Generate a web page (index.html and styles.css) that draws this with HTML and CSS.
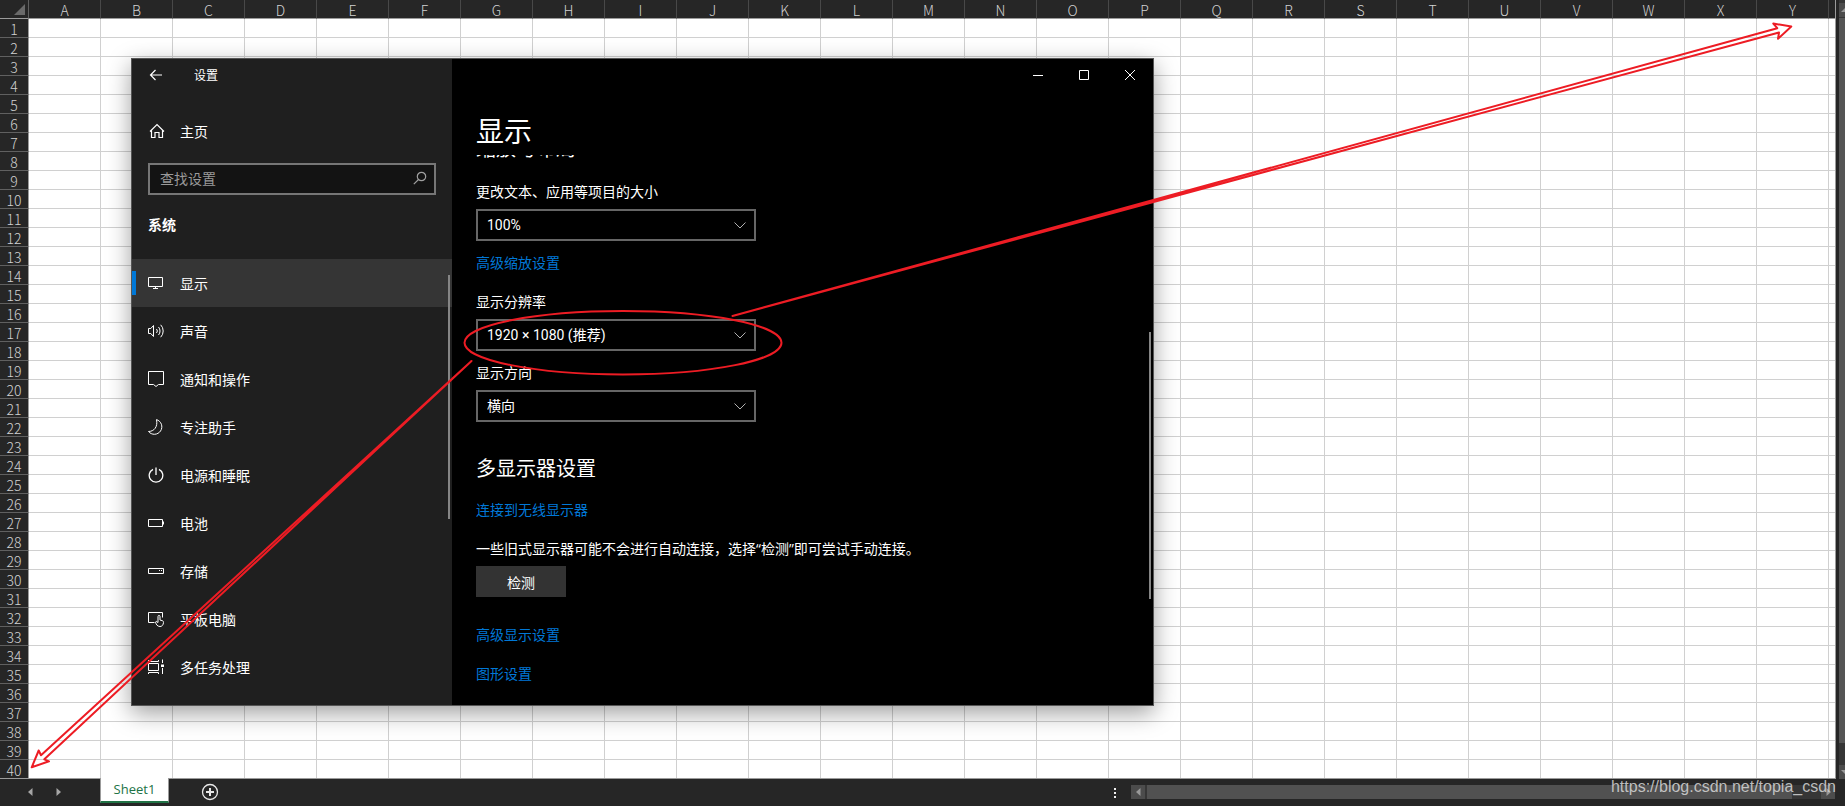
FILE: index.html
```html
<!DOCTYPE html>
<html lang="zh-CN">
<head>
<meta charset="utf-8">
<title>Sheet1</title>
<link rel="stylesheet" href="styles.css">
</head>
<body>
<div class="app">
  <div class="workspace">
    <div class="sheet">
      <table class="grid">
        <thead><tr id="columns"><th class="corner"><svg width="12" height="12" viewBox="0 0 12 12"><path d="M11 0v11H0z" fill="#6a6a6a"/></svg></th></tr></thead>
        <tbody id="rows"></tbody>
      </table>
    </div>
    <div class="vscroll">
      <button class="scroll-btn" aria-label="向上滚动"><svg width="6" height="14" viewBox="0 0 6 14"><path d="M6 5v4H2z" fill="#999"/></svg></button>
      <div class="vthumb"></div>
      <button class="scroll-btn" aria-label="向下滚动"><svg width="6" height="14" viewBox="0 0 6 14"><path d="M2 5h4v4z" fill="#999"/></svg></button>
    </div>
  </div>
  <footer class="tabs">
    <div class="tab-nav">
      <button aria-label="上一个"><svg width="5" height="8" viewBox="0 0 5 8"><path d="M4.500 0v8L0 4z" fill="#a6a6a6"/></svg></button>
      <button aria-label="下一个"><svg width="5" height="8" viewBox="0 0 5 8"><path d="M.5 0v8L5 4z" fill="#a6a6a6"/></svg></button>
    </div>
    <button class="tab">Sheet1</button>
    <button class="add" aria-label="新工作表"><svg width="18" height="18" viewBox="0 0 18 18" fill="none" stroke="#e8e8e8"><circle cx="9" cy="9" r="7.500" stroke-width="1.300"/><path d="M9 5v8M5 9h8" stroke-width="2"/></svg></button>
    <svg class="dots" width="2" height="10" viewBox="0 0 2 10" fill="#f0f0f0"><path d="M0 0h2v2H0zM0 4h2v2H0zM0 8h2v2H0z"/></svg>
    <div class="hscroll">
      <button class="h-btn" aria-label="向左滚动"><svg width="5" height="8" viewBox="0 0 5 8"><path d="M4.500 0v8L0 4z" fill="#999"/></svg></button>
      <div class="hthumb"></div>
      <button class="h-btn" aria-label="向右滚动"><svg width="5" height="8" viewBox="0 0 5 8"><path d="M.5 0v8L5 4z" fill="#999"/></svg></button>
    </div>
  </footer>
</div>

<section class="window">
  <aside class="side">
    <div class="side-title">
      <button class="back" aria-label="返回"><svg width="14" height="12" viewBox="0 0 14 12" fill="none" stroke="#fff" stroke-width="1.200"><path d="M13 6H1.500M6.500 1l-5 5 5 5"/></svg></button>
      <span>设置</span>
    </div>
    <button class="home"><svg width="16" height="16" viewBox="0 0 16 16" fill="none" stroke="#fff" stroke-width="1.200"><path d="M1 8.500 8 1.500l7 7M2.500 7.500v7h3.500v-5h4v5h3.500v-7"/></svg>主页</button>
    <div class="search">
      <input type="text" placeholder="查找设置" aria-label="查找设置">
      <svg width="14" height="14" viewBox="0 0 14 14" fill="none" stroke="#a0a0a0" stroke-width="1.200"><circle cx="8.500" cy="5.500" r="4.200"/><path d="M5.500 8.500.8 13.200"/></svg>
    </div>
    <h2 class="group">系统</h2>
    <nav class="nav">
      <button class="item active"><svg viewBox="0 0 16 16"><path d="M.5 2.500h14v9H.5zM5 13.500h5M7.500 11.500v2"/></svg>显示</button>
      <button class="item"><svg viewBox="0 0 16 16"><path d="M.5 5.500h2.300L5.500 2.500v11l-2.700-3H.5zM8.500 6a3 3 0 0 1 0 4M10.500 4a6 6 0 0 1 0 8M12.700 1.800a9 9 0 0 1 0 12.400"/></svg>声音</button>
      <button class="item"><svg viewBox="0 0 16 16"><path d="M.5 .5h15v13h-5L8 15.500l-2.500-2h-5z"/></svg>通知和操作</button>
      <button class="item"><svg viewBox="0 0 16 16"><path d="M8.500.6a7.500 7.500 0 1 1-8 11.900C6 12.500 10 8 8.500.6z"/></svg>专注助手</button>
      <button class="item"><svg viewBox="0 0 16 16"><path d="M5 2.300a6.800 6.800 0 1 0 6 0M8 .5V8" stroke-width="1.300"/></svg>电源和睡眠</button>
      <button class="item"><svg viewBox="0 0 16 16"><path d="M.5 4.500h14v7H.5zM15.500 6.500v3"/></svg>电池</button>
      <button class="item"><svg viewBox="0 0 16 16"><path d="M.5 5.500h15v5H.5zM11 7.500h1M13 7.500h1"/></svg>存储</button>
      <button class="item"><svg viewBox="0 0 16 16"><path d="M6.500 11.500h-6v-10h14v5M10 11V5.500c0-1.500 2-1.500 2 0V9l2 .6c1.200.3 1.700 1 1.500 2-.3 2.500-1.500 3.900-3.500 3.900-2.500 0-4-2-4.500-4.500.5-1 2-.8 2.500 1"/></svg>平板电脑</button>
      <button class="item"><svg viewBox="0 0 16 16"><path d="M.5 4.500h10v7H.5zM.5 1v1.500h10V1M.5 15v-1.500h10V15M14.500.5V4M14.500 9v6"/><path d="M13 5.500h3v2.500h-3z" fill="#fff" stroke="none"/></svg>多任务处理</button>
    </nav>
    <div class="thumb side-thumb"></div>
  </aside>
  <main class="main">
    <div class="caption">
      <button aria-label="最小化"><svg width="10" height="10" viewBox="0 0 10 10"><path d="M0 5.500h10"/></svg></button>
      <button aria-label="最大化"><svg width="10" height="10" viewBox="0 0 10 10"><path d="M.5.5h9v9h-9z"/></svg></button>
      <button aria-label="关闭"><svg width="10" height="10" viewBox="0 0 10 10"><path d="M0 0l10 10M10 0 0 10"/></svg></button>
    </div>
    <h1>显示</h1>
    <div class="scroll">
      <h2 class="scrolled">缩放与布局</h2>
      <div class="field first">
        <label for="scale">更改文本、应用等项目的大小</label>
        <div class="combo"><select id="scale"><option>100%</option></select><svg width="12" height="7" viewBox="0 0 12 7"><path d="M.5.5 6 6 11.500.5"/></svg></div>
      </div>
      <a class="after-field" href="#">高级缩放设置</a>
      <div class="field spaced">
        <label for="resolution">显示分辨率</label>
        <div class="combo"><select id="resolution"><option>1920 × 1080 (推荐)</option></select><svg width="12" height="7" viewBox="0 0 12 7"><path d="M.5.5 6 6 11.500.5"/></svg></div>
      </div>
      <div class="field">
        <label for="direction">显示方向</label>
        <div class="combo"><select id="direction"><option>横向</option></select><svg width="12" height="7" viewBox="0 0 12 7"><path d="M.5.5 6 6 11.500.5"/></svg></div>
      </div>
      <h2 class="multi">多显示器设置</h2>
      <a class="wireless" href="#">连接到无线显示器</a>
      <p class="note">一些旧式显示器可能不会进行自动连接，选择<span class="quote">“</span>检测<span class="quote">”</span>即可尝试手动连接。</p>
      <button class="detect">检测</button>
      <a class="advanced" href="#">高级显示设置</a>
      <a class="spaced" href="#">图形设置</a>
    </div>
    <div class="thumb main-thumb"></div>
  </main>
</section>

<svg class="marks" width="1845" height="806" viewBox="0 0 1845 806" fill="none" stroke="#ed1c24" stroke-width="2" stroke-linejoin="round">
  <ellipse cx="623" cy="342.700" rx="158.500" ry="31.700"/>
  <path d="M732.500 316 1777.300 28.200 1773.300 23.600 1791.300 26.500 1778 38.800 1779 32.500z"/>
  <path d="M471.500 361 41 755.300 38.700 750.500 31.700 767.300 49 761.300 44.300 759.300z"/>
</svg>
<div class="watermark">https://blog.csdn.net/topia_csdn</div>
<script src="script.js"></script>
</body>
</html>
```
FILE: styles.css
```css
* { box-sizing: border-box; }
body {
  margin: 0;
  background: #262626;
  font-family: "Noto Sans CJK SC", sans-serif;
  font-size: 14px;
  line-height: 20px;
  overflow: hidden;
}
button {
  margin: 0;
  padding: 0;
  border: 0;
  background: none;
  color: inherit;
  font: inherit;
}
svg { display: block; flex: none; }
h1, h2, p { margin: 0; font-weight: 400; }

/* spreadsheet */
.app { display: flex; flex-direction: column; height: 100vh; }
.workspace { flex: 1; min-height: 0; display: flex; gap: 3px; }
.sheet {
  flex: 1;
  min-width: 0;
  overflow: hidden;
  background: #fff;
  border-right: 1px solid #9b9b9b;
  border-bottom: 1px solid #9b9b9b;
}
.grid { width: 100%; table-layout: fixed; border-collapse: separate; border-spacing: 0; }
.grid th, .grid td { height: 19px; padding: 0; border-right: 1px solid #d0d0d0; border-bottom: 1px solid #d0d0d0; }
.grid th {
  width: 72px;
  padding-top: 2px;
  background: #262626;
  color: #d2d2d2;
  font-weight: 300;
  line-height: 16px;
  text-align: center;
  overflow: hidden;
}
.grid thead th { border-right-color: #484848; border-bottom-color: #9b9b9b; }
.grid tbody th { border-right-color: #9b9b9b; border-bottom-color: #606060; }
.grid thead .corner { width: 29px; border-right-color: #606060; }
.corner svg { margin-left: 14px; }
.grid thead th:last-child { width: auto; }
.grid tr > :last-child { border-right: 0; }

.vscroll { width: 6px; padding-top: 3px; background: #363636; display: flex; flex-direction: column; }
.scroll-btn { height: 14px; flex: none; background: #4c4c4c; }
.vthumb { flex: 1; margin: 1px 0 22px; background: #555; }

.tabs { height: 27px; flex: none; display: flex; align-items: flex-start; background: #262626; }
.tab-nav { width: 100px; height: 26px; padding-left: 28px; display: flex; align-items: center; gap: 23px; }
.tab {
  width: 69px;
  height: 25px;
  margin-top: -1px;
  background: #fff;
  color: #217346;
  border: 1px solid #9b9b9b;
  border-width: 0 1px 2px;
  border-bottom-color: #217346;
  font-family: "Open Sans", sans-serif;
  font-size: 13px;
  line-height: 23px;
}
.add { margin: 4px 0 0 32px; }
.dots { margin: 9px 15px 0 auto; }
.hscroll { width: 704px; height: 14px; margin: 6px 10px 0 0; display: flex; background: #363636; }
.h-btn { width: 14px; background: #4c4c4c; display: flex; align-items: center; justify-content: center; }
.hthumb { flex: 1; margin: 0 29px 0 2px; background: #515151; }

/* settings window */
.window {
  position: absolute;
  left: 131px;
  top: 58px;
  width: 1023px;
  height: 648px;
  display: grid;
  grid-template-columns: 320px 1fr;
  border: 1px solid #555;
  background: #000;
  color: #fff;
  box-shadow: 0 7px 22px rgba(0, 0, 0, .38);
}
.side { position: relative; background: #1f1f1f; display: flex; flex-direction: column; }
.side-title { height: 32px; padding-left: 17px; display: flex; align-items: center; gap: 31px; font-size: 12px; }
.home { height: 48px; margin-top: 16px; padding-left: 17px; display: flex; align-items: center; gap: 15px; }
.search {
  height: 32px;
  margin: 8px 16px 0;
  padding: 0 7px 2px 10px;
  display: flex;
  align-items: center;
  border: 2px solid #767676;
  background: #131313;
}
.search input { flex: 1; min-width: 0; padding: 0; border: 0; outline: 0; background: none; color: #fff; font: inherit; }
.search input::placeholder { color: #9a9a9a; opacity: 1; }
.group { margin: 19px 16px 25px; font-size: 14px; font-weight: 700; }
.nav { display: flex; flex-direction: column; }
.item { height: 48px; padding-left: 16px; display: flex; align-items: center; gap: 16px; }
.item svg { width: 16px; height: 16px; fill: none; stroke: #fff; }
.active { padding-left: 0; background: #353535; }
.active::before { content: ""; width: 4px; height: 24px; margin-right: -4px; background: #0078d7; }
.thumb { position: absolute; width: 2px; background: #858585; }
.side-thumb { right: 2px; top: 216px; height: 244px; }
.main-thumb { right: 2px; top: 273px; height: 267px; }

.main { position: relative; min-width: 0; display: flex; flex-direction: column; }
.caption { height: 32px; display: flex; justify-content: flex-end; }
.caption button { width: 46px; display: flex; align-items: center; justify-content: center; }
.caption svg { fill: none; stroke: #fff; }
h1 { margin: 19px 24px 5px; font-size: 28px; line-height: 40px; }
.scroll { flex: 1; min-height: 0; overflow: hidden; padding: 0 24px; display: flex; flex-direction: column; align-items: flex-start; }
.scroll > * { flex: none; }
.scroll h2 { font-size: 20px; line-height: 28px; }
.scroll .scrolled { margin-top: -21px; }
.field { width: 280px; margin-top: 11px; display: flex; flex-direction: column; gap: 8px; }
.first { margin-top: 19px; }
.spaced, .note { margin-top: 19px; }
.after-field { margin-top: 11px; }
.combo { display: grid; align-items: center; }
.combo select, .combo svg { grid-area: 1 / 1; }
.combo select {
  height: 32px;
  padding: 0 9px;
  border: 2px solid #666;
  border-radius: 0;
  background: #000;
  color: #fff;
  font-family: Roboto, "Noto Sans CJK SC", sans-serif;
  font-size: 14px;
  appearance: none;
}
.combo svg { justify-self: end; margin-right: 10px; fill: none; stroke: #b0b0b0; pointer-events: none; }
.scroll a { color: #0078d7; text-decoration: none; }
.multi { margin-top: 32px; }
.wireless { margin-top: 17px; }
.quote { font-family: "Open Sans", sans-serif; line-height: 1; }
.detect { width: 90px; height: 31px; margin-top: 8px; background: #333; }
.scroll .advanced { margin-top: 27px; }

/* annotations */
.marks { position: absolute; left: 0; top: 0; pointer-events: none; }
.watermark {
  position: absolute;
  right: 9px;
  bottom: 9px;
  color: rgba(215, 215, 215, .85);
  font-family: "Liberation Sans", sans-serif;
  font-size: 16px;
}
```
FILE: script.js
```js
const columns = document.getElementById("columns");
const rows = document.getElementById("rows");
const letters = "ABCDEFGHIJKLMNOPQRSTUVWXY".split("").concat("");

letters.forEach((letter) => {
  const th = document.createElement("th");
  th.textContent = letter;
  columns.append(th);
});

for (let n = 1; n <= 40; n++) {
  const tr = document.createElement("tr");
  const th = document.createElement("th");
  th.textContent = n;
  tr.append(th);
  letters.forEach(() => tr.append(document.createElement("td")));
  rows.append(tr);
}
```
